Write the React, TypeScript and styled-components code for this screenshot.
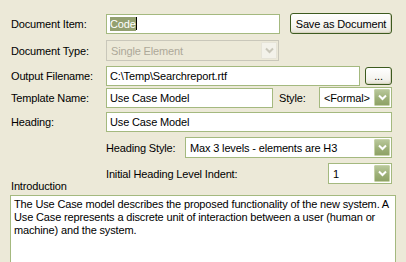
import React from "react";
import styled, { createGlobalStyle } from "styled-components";

const GlobalStyle = createGlobalStyle`
  html, body {
    margin: 0;
    padding: 0;
    background: #ece9d8;
    overflow: hidden;
  }
`;

const Chevron = ({ color }: { color: string }) => (
  <svg width="9" height="7" viewBox="0 0 9 7">
    <path d="M1 1.5 L4.5 5 L8 1.5" fill="none" stroke={color} strokeWidth="2" />
  </svg>
);

const Window = styled.div`
  width: 406px;
  height: 262px;
  overflow: hidden;
  background: #ece9d8;
  font-family: "Liberation Sans", Arial, sans-serif;
  font-size: 11px;
  letter-spacing: -0.15px;
  color: #000;
  display: flex;
  flex-direction: column;
`;

const Row = styled.div<{ $mt: number; $h?: number }>`
  display: flex;
  align-items: center;
  margin-top: ${(p) => p.$mt}px;
  height: ${(p) => p.$h ?? 21}px;
  padding-left: 11px;
`;

const Label = styled.div<{ $w: number; $pl?: number }>`
  box-sizing: border-box;
  width: ${(p) => p.$w}px;
  padding-left: ${(p) => p.$pl ?? 0}px;
  flex: none;
  white-space: nowrap;
`;

const Gap = styled.div<{ $w: number }>`
  width: ${(p) => p.$w}px;
  flex: none;
`;

const TextBox = styled.div<{ $w: number; $h?: number }>`
  box-sizing: border-box;
  width: ${(p) => p.$w}px;
  height: ${(p) => p.$h ?? 20}px;
  flex: none;
  border: 1px solid #a4b97f;
  background: #fff;
  padding: 0 3px;
  display: flex;
  align-items: center;
  white-space: nowrap;
  overflow: hidden;
`;

const Selected = styled.span`
  background: #93a070;
  color: #fff;
  padding: 1px 0;
`;

const Caret = styled.span`
  display: inline-block;
  width: 1px;
  height: 13px;
  background: #000;
`;

const Combo = styled.div<{ $w: number; $disabled?: boolean }>`
  box-sizing: border-box;
  width: ${(p) => p.$w}px;
  height: 21px;
  flex: none;
  border: 1px solid ${(p) => (p.$disabled ? "#c9c7ba" : "#a4b97f")};
  background: ${(p) => (p.$disabled ? "#ece9d8" : "#fff")};
  color: ${(p) => (p.$disabled ? "#aca899" : "#000")};
  display: flex;
  align-items: center;
  padding: 1px;
`;

const ComboText = styled.div`
  flex: 1;
  padding-left: 3px;
  white-space: nowrap;
  overflow: hidden;
`;

const DropButton = styled.div<{ $disabled?: boolean }>`
  box-sizing: border-box;
  width: 16px;
  height: 17px;
  flex: none;
  display: flex;
  align-items: center;
  justify-content: center;
  border-radius: 1px;
  border: 1px solid ${(p) => (p.$disabled ? "#e6e4d8" : "#c6d2a8")};
  background: ${(p) =>
    p.$disabled
      ? "#f3f2ea"
      : "linear-gradient(#b8c79a, #9bae75 60%, #8ea266)"};
`;

const PushButton = styled.div<{ $w: number; $h: number }>`
  box-sizing: border-box;
  width: ${(p) => p.$w}px;
  height: ${(p) => p.$h}px;
  flex: none;
  border: 1px solid #3d5b1f;
  border-radius: 3px;
  background: linear-gradient(#ffffff, #f4f3ee 70%, #e3e0d2);
  box-shadow: inset -1px -1px 0 #d8d4c2;
  display: flex;
  align-items: center;
  justify-content: center;
  white-space: nowrap;
`;

const IntroLabel = styled.div`
  margin-top: -4px;
  height: 13px;
  line-height: 13px;
  padding-left: 11px;
`;

const Memo = styled.div`
  box-sizing: border-box;
  margin: 2px 0 0 10px;
  width: 386px;
  height: 80px;
  flex: none;
  border: 1px solid #a4b97f;
  background: #fff;
  padding: 2px 3px;
  line-height: 13px;
  white-space: nowrap;
`;

const introLines = [
  "The Use Case model describes the proposed functionality of the new system. A",
  "Use Case represents a discrete unit of interaction between a user (human or",
  "machine) and the system.",
];

export default function App() {
  return (
    <>
      <GlobalStyle />
      <Window>
        <Row $mt={13}>
          <Label $w={95}>Document Item:</Label>
          <TextBox $w={174}>
            <Selected>Code</Selected>
            <Caret />
          </TextBox>
          <Gap $w={10} />
          <PushButton $w={102} $h={21}>
            Save as Document
          </PushButton>
        </Row>
        <Row $mt={6}>
          <Label $w={95}>Document Type:</Label>
          <Combo $w={173} $disabled>
            <ComboText>Single Element</ComboText>
            <DropButton $disabled>
              <Chevron color="#c9c7ba" />
            </DropButton>
          </Combo>
        </Row>
        <Row $mt={5} $h={20}>
          <Label $w={95}>Output Filename:</Label>
          <TextBox $w={254}>C:\Temp\Searchreport.rtf</TextBox>
          <Gap $w={5} />
          <PushButton $w={27} $h={18}>
            ...
          </PushButton>
        </Row>
        <Row $mt={1}>
          <Label $w={95}>Template Name:</Label>
          <TextBox $w={167}>Use Case Model</TextBox>
          <Label $w={46} $pl={6}>
            Style:
          </Label>
          <Combo $w={73}>
            <ComboText>&lt;Formal&gt;</ComboText>
            <DropButton>
              <Chevron color="#fff" />
            </DropButton>
          </Combo>
        </Row>
        <Row $mt={4} $h={20}>
          <Label $w={95}>Heading:</Label>
          <TextBox $w={286}>Use Case Model</TextBox>
        </Row>
        <Row $mt={5}>
          <Gap $w={95} />
          <Label $w={79}>Heading Style:</Label>
          <Combo $w={207}>
            <ComboText>Max 3 levels - elements are H3</ComboText>
            <DropButton>
              <Chevron color="#fff" />
            </DropButton>
          </Combo>
        </Row>
        <Row $mt={5}>
          <Gap $w={95} />
          <Label $w={222}>Initial Heading Level Indent:</Label>
          <Combo $w={64}>
            <ComboText>1</ComboText>
            <DropButton>
              <Chevron color="#fff" />
            </DropButton>
          </Combo>
        </Row>
        <IntroLabel>Introduction</IntroLabel>
        <Memo>
          {introLines.map((l) => (
            <div key={l}>{l}</div>
          ))}
        </Memo>
      </Window>
    </>
  );
}
